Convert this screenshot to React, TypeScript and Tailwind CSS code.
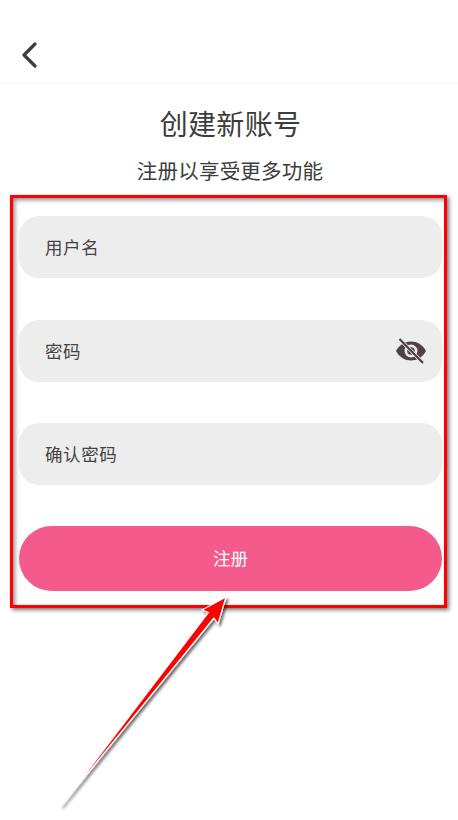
const FONT = "font-['Noto_Sans_CJK_SC','Noto_Sans',sans-serif]"

function EyeOff() {
  return (
    <svg width="32" height="26" viewBox="0 0 32 26" className="shrink-0">
      <path d="M1 13C4.500 6.500 10 3.500 16 3.500S27.500 6.500 31 13C27.500 19.500 22 22.500 16 22.500S4.500 19.500 1 13Z" fill="#4f4246" />
      <circle cx="16" cy="13" r="6.500" fill="#ededed" />
      <circle cx="16" cy="13" r="3.800" fill="#4f4246" />
      <line x1="4.500" y1="1" x2="28" y2="25" stroke="#ededed" strokeWidth="3.600" />
      <line x1="4.500" y1="1" x2="28" y2="25" stroke="#4f4246" strokeWidth="2.200" />
    </svg>
  )
}

function Field({ label, icon }: { label: string; icon?: boolean }) {
  return (
    <div className="flex h-[62px] items-center justify-between rounded-[20px] bg-[#ededed] pl-[26px] pr-[15px]">
      <span className="text-[17.500px] tracking-[0.600px] text-[#444444]">{label}</span>
      {icon && <EyeOff />}
    </div>
  )
}

export default function App() {
  return (
    <div className={`relative h-[820px] w-[458px] overflow-hidden bg-white ${FONT}`}>
      <div className="flex h-[84px] items-end border-b border-[#f3f3f3] pb-[15px] pl-[20px]">
        <svg width="18" height="26" viewBox="0 0 18 26">
          <path d="M15 2 4 13l11 11" fill="none" stroke="#3d3d3d" strokeWidth="3.200" strokeLinecap="round" strokeLinejoin="round" />
        </svg>
      </div>

      <h1 className="mt-[19px] pl-[3px] text-center text-[28px] leading-[40px] font-normal tracking-[0.300px] text-[#3c3c3c]">创建新账号</h1>
      <p className="mt-[12px] pl-[2px] text-center text-[20.500px] leading-[30px] tracking-[0.200px] text-[#3c3c3c]">注册以享受更多功能</p>

      <div className="mt-[31px] ml-[19px] flex w-[423px] flex-col">
        <Field label="用户名" />
        <div className="mt-[42px]"><Field label="密码" icon /></div>
        <div className="mt-[41px]"><Field label="确认密码" /></div>
        <button className="mt-[41px] h-[65px] rounded-[33px] bg-[#f45a8b] text-[17.500px] text-white">注册</button>
      </div>

      {/* annotation on top of the screenshot */}
      <div className="absolute top-[195px] left-[10px] h-[413px] w-[437px] border-[3px] border-[#ff0000] shadow-[2px_2px_4px_rgba(0,0,0,0.55),inset_2px_2px_4px_rgba(0,0,0,0.45)]" />
      <svg width="458" height="820" viewBox="0 0 458 820" className="pointer-events-none absolute top-0 left-0">
        <defs>
          <filter id="arrowShadow" x="-20%" y="-20%" width="140%" height="140%">
            <feDropShadow dx="2" dy="2" stdDeviation="1.500" floodColor="#000" floodOpacity="0.6" />
          </filter>
        </defs>
        <path
          d="M61 806 208.500 612.500 202 610 226 597 218 624 214 618Z"
          fill="#ff0000"
          stroke="#ffffff"
          strokeWidth="1.200"
          strokeLinejoin="round"
          filter="url(#arrowShadow)"
        />
      </svg>
    </div>
  )
}
